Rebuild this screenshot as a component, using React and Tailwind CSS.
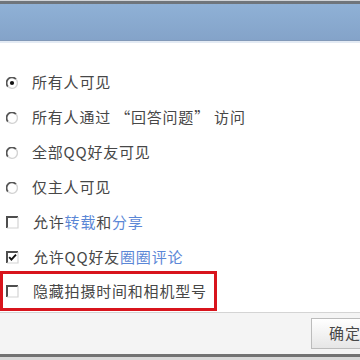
import React from 'react'

const Radio = ({ checked }) => (
  <svg width="12" height="12" viewBox="0 0 12 12" className="shrink-0">
    <circle cx="6" cy="6" r="5.5" fill="#ffffff" />
    <path d="M10 2.2 A5 5 0 0 0 2 9.6" stroke="#555555" strokeWidth="1.8" fill="none" />
    <path d="M2 9.6 A5 5 0 0 0 10 2.2" stroke="#d4d4d4" strokeWidth="1.4" fill="none" />
    {checked && <circle cx="6" cy="6" r="2.1" fill="#111111" />}
  </svg>
)

const Checkbox = ({ checked }) => (
  <svg width="13" height="13" viewBox="0 0 13 13" className="shrink-0">
    <rect x="0" y="0" width="13" height="13" fill="#ffffff" />
    <path d="M1 12 V1 H12" stroke="#4e4e4e" strokeWidth="2" fill="none" />
    <path d="M12 1 V12 H1" stroke="#d4d4d4" strokeWidth="1.2" fill="none" />
    {checked && <path d="M3.2 6.2 L5.4 8.6 L10 3.6" stroke="#111111" strokeWidth="1.9" fill="none" />}
  </svg>
)

const Row = ({ icon, children }) => (
  <div className="flex items-center h-[35px] pl-[6px]">
    {icon}
    <span className="ml-[14px] text-[15px] tracking-[0.8px] text-[#474747] whitespace-nowrap">{children}</span>
  </div>
)

const Link = ({ children }) => <span className="text-[#5b87d6]">{children}</span>

export default function App() {
  return (
    <div
      className="w-[360px] h-[360px] overflow-hidden bg-white flex flex-col"
      style={{ fontFamily: '"Noto Sans CJK SC", "Noto Sans", sans-serif' }}
    >
      {/* title bar */}
      <div className="h-[1px] bg-[#d0d4d8]" />
      <div className="h-[3px] bg-[#6f757b]" />
      <div className="h-[36px] bg-gradient-to-b from-[#8fb1d6] to-[#84a3c9]" />
      <div className="h-[1px] bg-[#8299b8]" />
      <div className="h-[2px] bg-[#e4ebf4]" />

      {/* options */}
      <div className="pt-[22px] flex flex-col">
        <Row icon={<Radio checked />}>所有人可见</Row>
        <Row icon={<Radio />}>所有人通过 “回答问题” 访问</Row>
        <Row icon={<Radio />}>全部QQ好友可见</Row>
        <Row icon={<Radio />}>仅主人可见</Row>
        <Row icon={<Checkbox />}>允许<Link>转载</Link>和<Link>分享</Link></Row>
        <Row icon={<Checkbox checked />}>允许QQ好友<Link>圈圈评论</Link></Row>
        <div className="-mt-[4px] w-[217px] h-[40px] border-[3px] border-[#d8141c] flex items-center pl-[3px]">
          <Checkbox />
          <span className="ml-[14px] text-[15px] tracking-[0.8px] text-[#474747] whitespace-nowrap">隐藏拍摄时间和相机型号</span>
        </div>
      </div>

      {/* footer */}
      <div className="mt-[1px] h-[42px] border-t border-[#d4d4d4] bg-[#f4f4f4] flex items-center pl-[311px]">
        <div className="h-[31px] w-[80px] shrink-0 border border-[#bcbcbc] bg-gradient-to-b from-white to-[#e6e6e6] flex items-center pl-[17px] text-[15px] tracking-[1px] text-[#474747]">
          确定
        </div>
      </div>
      <div className="h-[3px] bg-[#727272]" />
      <div className="flex-1 bg-[#d8d8d8]" />
    </div>
  )
}
